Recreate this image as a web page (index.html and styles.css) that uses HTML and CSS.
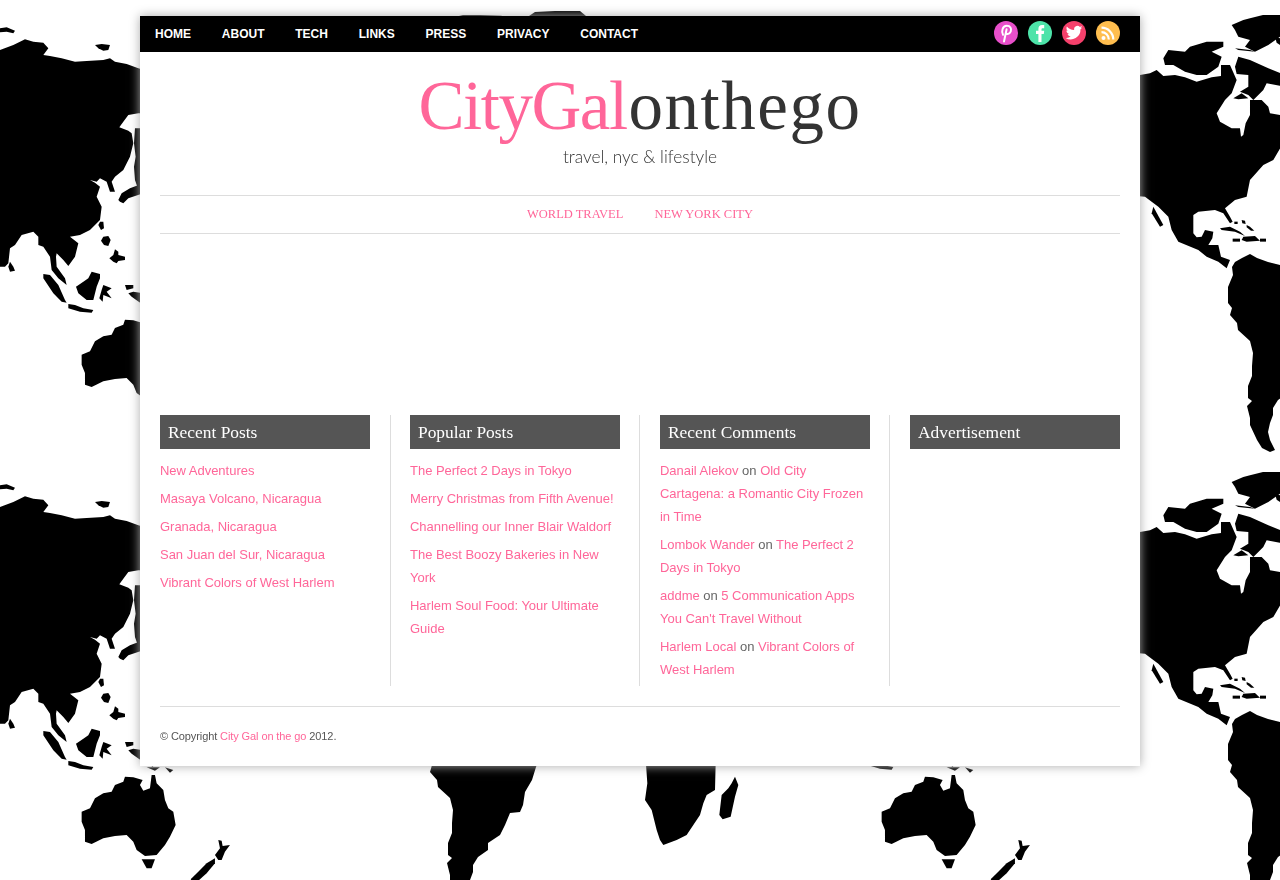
FILE: index.html
```html
<!DOCTYPE html>
<html lang="en">
<head>
  <meta charset="UTF-8">
  <title>City Gal on the go</title>
  <link rel="stylesheet" href="styles.css">
</head>
<body>
  <!-- world map wallpaper, one tile is 800x457 -->
  <svg class="map" width="1280" height="880" aria-hidden="true">
    <defs>
      <pattern id="tile" width="800" height="457" patternUnits="userSpaceOnUse">
        <!-- asia, islands (coords read at 3x) -->
        <g transform="scale(.3333)" fill="#000">
          <polygon points="0,150 40,135 60,125 75,118 100,125 130,128 145,145 130,165 150,168 185,175 225,185 260,183 310,180 330,175 345,185 380,192 415,205 450,215 450,340 415,340 385,345 370,365 358,382 385,392 395,400 400,430 390,470 370,510 345,530 335,545 345,575 330,575 320,545 300,535 290,545 270,540 285,548 300,560 290,590 305,620 300,660 270,690 240,705 210,710 235,730 225,770 205,798 190,780 170,760 168,770 170,800 195,835 200,855 175,835 155,810 150,770 130,740 115,735 115,710 100,695 65,705 45,735 30,745 25,790 15,800 0,800"/>
          <polygon points="405,385 430,385 430,560 412,560 405,540 402,500 407,470 402,430"/>
          <polygon points="0,85 20,82 45,92 40,100 20,95 0,97"/>
          <polygon points="285,135 305,132 330,135 325,150 310,152 295,145"/>
          <polygon points="30,785 40,800 45,812 30,815 25,800"/>
          <polygon points="355,600 365,580 390,565 430,550 430,580 385,595 370,610 360,605"/>
          <polygon points="300,665 310,665 312,685 303,690 295,675"/>
          <polygon points="310,710 325,708 332,720 325,738 312,735 303,722"/>
          <polygon points="345,748 355,755 355,765 375,770 375,780 355,783 350,790 340,785 328,775 340,765"/>
          <polygon points="130,822 150,825 175,855 195,900 200,908 185,905 160,880 130,835"/>
          <polygon points="205,912 225,915 250,925 280,930 275,938 240,935 205,925"/>
          <polygon points="275,815 300,822 300,835 290,860 280,900 260,900 235,880 228,860 250,845 265,835"/>
          <polygon points="310,855 335,865 320,875 335,895 310,885 308,905 298,895 305,870"/>
          <polygon points="375,855 400,855 400,865 380,870"/>
          <polygon points="385,880 400,875 430,880 460,930 490,945 430,915 395,890"/>
        </g>
        <!-- australia, nz -->
        <g transform="translate(-160 303) scale(.3333)">
          <polygon points="725,155 750,145 765,115 790,100 815,95 825,75 850,65 855,50 880,52 908,60 900,75 910,92 930,85 935,45 945,45 950,70 970,90 975,120 985,145 1000,155 1007,195 990,230 975,255 950,285 915,288 890,270 880,245 860,225 825,228 790,235 755,252 735,245 735,210 725,185"/>
          <polygon points="905,298 945,298 935,325 920,325"/>
          <polygon points="1135,240 1145,242 1148,258 1170,255 1155,275 1145,300 1135,300 1125,285 1140,265"/>
          <polygon points="1125,295 1125,310 1100,340 1080,358 1060,372 1040,380 1055,355 1075,335 1100,310"/>
          <polygon points="920,22 960,22 945,32"/>
          <polygon points="975,22 1000,30 990,38"/>
        </g>
        <!-- africa, madagascar -->
        <g transform="translate(640 303) scale(.3333)">
          <polygon points="15,-30 228,-30 225,90 200,105 190,130 180,165 160,195 140,225 110,240 70,255 60,240 50,210 35,150 15,120 22,70"/>
          <polygon points="285,50 295,75 285,110 272,170 248,178 238,165 245,105 265,85 275,70"/>
        </g>
        <!-- north america -->
        <g transform="translate(335 0) scale(.3333)">
          <polygon points="-30,235 15,225 45,220 65,210 85,228 120,225 150,232 185,245 230,232 258,228 258,195 285,195 305,240 290,280 270,300 245,340 255,365 290,385 315,385 318,410 325,405 332,370 345,345 345,300 380,300 400,320 405,340 435,345 450,345 450,420 415,480 385,495 345,540 335,590 300,600 270,625 285,650 293,665 285,670 265,640 240,630 190,635 175,645 175,700 185,712 200,710 210,690 235,695 232,715 220,735 250,735 258,770 285,780 275,805 250,785 215,770 190,750 130,725 110,690 100,650 70,620 30,590 -30,585"/>
          <polygon points="55,620 85,675 75,680 50,640"/>
          <polygon points="85,175 100,150 150,155 165,140 200,130 215,125 265,125 265,140 230,155 260,170 250,200 215,225 185,225 150,215 115,195 90,195"/>
          <polygon points="300,200 310,170 345,180 400,205 450,225 450,260 395,250 385,270 355,300 340,285 315,275 340,260 340,225 305,222"/>
          <polygon points="295,295 320,280 340,295 310,298"/>
          <polygon points="290,75 325,60 345,55 384,45 435,45 500,47 500,120 435,110 400,135 360,155 330,140 345,120 310,110 300,90"/>
          <polygon points="300,145 345,150 360,155 310,150"/>
          <polygon points="420,110 435,115 435,135 425,128"/>
          <polygon points="255,685 285,680 315,695 330,708 300,695 260,690"/>
          <polygon points="325,710 360,708 375,722 335,725 320,720"/>
          <polygon points="293,716 315,716 315,725 293,725"/>
          <polygon points="375,716 393,716 393,725 375,725"/>
          <polygon points="298,665 308,665 308,672 298,672"/>
          <polygon points="320,660 330,662 332,672 322,670"/>
          <polygon points="335,675 345,680 358,692 348,692 335,682"/>
        </g>
        <!-- south america, plain tile coords -->
        <polygon points="435,262 442,258 450,254 457,258 468,262 480,265 500,272 525,290 540,300 536,310 532,323 525,335 523,348 520,355 510,356 505,368 500,378 488,386 488,393 478,400 473,408 473,415 470,423 468,432 470,440 475,450 470,452 462,448 457,440 450,425 450,418 447,406 452,401 448,398 448,386 452,376 452,366 453,353 450,341 438,330 437,323 430,315 432,308 428,303 428,287 433,275 432,267"/>
        <!-- top of greenland -->
        <polygon points="529,16 535,12 555,11 580,11 586,16 586,30 529,30"/>
      </pattern>
    </defs>
    <rect width="1280" height="880" fill="url(#tile)"/>
  </svg>

  <div class="wrapper">
    <nav class="topbar">
      <ul class="menu">
        <li><a href="#">Home</a></li>
        <li><a href="#">About</a></li>
        <li><a href="#">Tech</a></li>
        <li><a href="#">Links</a></li>
        <li><a href="#">Press</a></li>
        <li><a href="#">Privacy</a></li>
        <li><a href="#">Contact</a></li>
      </ul>
      <div class="social">
        <a href="#" title="Pinterest">
          <svg width="24" height="24" viewBox="0 0 24 24">
            <circle cx="12" cy="12" r="12" fill="#e84fca"/>
            <path d="M9 13.800C7.300 11 8.200 4.800 12.800 4.800c3.600 0 4.800 2.800 4 5.400-.7 2.200-2.800 3.400-4.800 2.300M12.600 8.200 10 20.500" fill="none" stroke="#fff" stroke-width="2" stroke-linecap="round"/>
          </svg>
        </a>
        <a href="#" title="Facebook">
          <svg width="24" height="24" viewBox="0 0 24 24">
            <circle cx="12" cy="12" r="12" fill="#4de3a9"/>
            <path d="M10.400 21V13H8V9.800h2.400V8c0-2.600 1.400-4 3.600-4h2.200v3.200h-1.500c-.9 0-1.200.4-1.200 1.200v1.400h2.700l-.4 3.200h-2.300v8z" fill="#fff"/>
          </svg>
        </a>
        <a href="#" title="Twitter">
          <svg width="24" height="24" viewBox="0 0 24 24">
            <circle cx="12" cy="12" r="12" fill="#f5406b"/>
            <path d="M20.500 6.500c-.6.3-1.300.4-2 .5.700-.4 1.300-1.100 1.500-1.900-.7.400-1.400.7-2.100.8a3.400 3.400 0 0 0-5.800 3.100C9.100 8.800 6.600 7.400 4.900 5.400c-.9 1.600-.4 3.600 1 4.600-.5 0-1.100-.2-1.500-.4 0 1.700 1.200 3.100 2.700 3.400-.5.100-1 .2-1.500.1.400 1.400 1.700 2.300 3.100 2.400a6.900 6.900 0 0 1-5.100 1.400 9.700 9.700 0 0 0 14.900-8.600c.8-.5 1.500-1.200 2-2z" fill="#fff"/>
          </svg>
        </a>
        <a href="#" title="RSS">
          <svg width="24" height="24" viewBox="0 0 24 24">
            <circle cx="12" cy="12" r="12" fill="#ffbe4f"/>
            <circle cx="7.500" cy="17" r="2" fill="#fff"/>
            <path d="M5.500 11.200a7.300 7.300 0 0 1 7.300 7.300M5.500 6.700a11.800 11.800 0 0 1 11.800 11.800" fill="none" stroke="#fff" stroke-width="2.200"/>
          </svg>
        </a>
      </div>
    </nav>

    <header class="masthead">
      <a href="#" class="logo"><span class="logo-pink">CityGal</span><span class="logo-dark">onthego</span></a>
      <div class="tagline">travel, nyc &amp; lifestyle</div>
    </header>

    <nav class="catnav">
      <a href="#">World Travel</a>
      <a href="#">New York City</a>
    </nav>

    <div class="slider"></div>

    <div class="widgets">
      <section class="widget">
        <h3>Recent Posts</h3>
        <ul>
          <li><a href="#">New Adventures</a></li>
          <li><a href="#">Masaya Volcano, Nicaragua</a></li>
          <li><a href="#">Granada, Nicaragua</a></li>
          <li><a href="#">San Juan del Sur, Nicaragua</a></li>
          <li><a href="#">Vibrant Colors of West Harlem</a></li>
        </ul>
      </section>
      <section class="widget">
        <h3>Popular Posts</h3>
        <ul>
          <li><a href="#">The Perfect 2 Days in Tokyo</a></li>
          <li><a href="#">Merry Christmas from Fifth Avenue!</a></li>
          <li><a href="#">Channelling our Inner Blair Waldorf</a></li>
          <li><a href="#">The Best Boozy Bakeries in New York</a></li>
          <li><a href="#">Harlem Soul Food: Your Ultimate Guide</a></li>
        </ul>
      </section>
      <section class="widget">
        <h3>Recent Comments</h3>
        <ul>
          <li><a href="#">Danail Alekov</a> on <a href="#">Old City Cartagena: a Romantic City Frozen in Time</a></li>
          <li><a href="#">Lombok Wander</a> on <a href="#">The Perfect 2 Days in Tokyo</a></li>
          <li><a href="#">addme</a> on <a href="#">5 Communication Apps You Can't Travel Without</a></li>
          <li><a href="#">Harlem Local</a> on <a href="#">Vibrant Colors of West Harlem</a></li>
        </ul>
      </section>
      <section class="widget">
        <h3>Advertisement</h3>
      </section>
    </div>

    <footer class="copyright">
      © Copyright <a href="#">City Gal on the go</a> 2012.
    </footer>
  </div>
</body>
</html>
```

FILE: styles.css
```css
html, body {
  margin: 0;
  padding: 0;
}
body {
  font-family: "Liberation Sans", Arial, sans-serif;
  font-size: 13px;
  color: #666;
  background: #fff;
  padding-top: 16px;
  padding-bottom: 20px;
}
a {
  color: #ff6699;
  text-decoration: none;
}
ul {
  list-style: none;
  margin: 0;
  padding: 0;
}
.map {
  position: fixed;
  top: 0;
  left: 0;
  z-index: -1;
}
.wrapper {
  width: 1000px;
  height: 750px;
  margin: 0 auto;
  background: #fff;
  box-shadow: 0 0 10px #aaa;
}

/* top bar */
.topbar {
  display: flex;
  justify-content: space-between;
  align-items: center;
  box-sizing: border-box;
  height: 36px;
  background: #000;
  padding: 0 20px 2px 15px;
}
.menu {
  display: flex;
  gap: 30.8px;
}
.menu a {
  color: #fff;
  font-size: 12px;
  font-weight: bold;
  text-transform: uppercase;
}
.social {
  display: flex;
  gap: 10px;
}
.social a, .social svg {
  display: block;
}

/* logo */
.masthead {
  height: 143px;
  padding-top: 15px;
  box-sizing: border-box;
  text-align: center;
}
.logo {
  display: block;
  font-family: "Liberation Serif", serif;
  font-size: 69px;
  line-height: 78px;
}
.logo-pink {
  color: #ff6699;
  letter-spacing: -1.5px;
}
.logo-dark {
  color: #333;
  letter-spacing: 1.5px;
  margin-left: 2px;
}
.tagline {
  margin-top: 2px;
  font-family: Lato, sans-serif;
  font-weight: 300;
  font-size: 17.3px;
  line-height: 20px;
  color: #333;
}

/* categories */
.catnav {
  display: flex;
  justify-content: center;
  gap: 31px;
  margin: 0 20px;
  height: 37px;
  line-height: 36px;
  border-top: 1px solid #ddd;
  border-bottom: 1px solid #ddd;
  font-family: "Liberation Serif", serif;
  font-size: 12.5px;
  text-transform: uppercase;
}
.slider {
  height: 181px;
}

/* footer widgets */
.widgets {
  display: flex;
  gap: 20px;
  margin: 0 20px;
}
.widget {
  box-sizing: border-box;
  width: 230px;
  height: 271px;
  padding-right: 19px;
  border-right: 1px solid #ddd;
}
.widget:first-child {
  width: 231px;
  padding-right: 20px;
  margin-right: -1px;
}
.widget:last-child {
  width: 210px;
  padding-right: 0;
  border-right: 0;
}
.widget h3 {
  margin: 0 0 10px;
  padding-left: 8px;
  height: 34px;
  line-height: 34px;
  background: #555;
  color: #fff;
  font-family: "Liberation Serif", serif;
  font-size: 17.4px;
  font-weight: normal;
}
.widget li {
  line-height: 23px;
  margin-bottom: 5px;
  letter-spacing: -.02px;
}
.copyright {
  margin: 20px 20px 0;
  border-top: 1px solid #ddd;
  padding-top: 22px;
  font-size: 11px;
  line-height: 15px;
  letter-spacing: -.1px;
  color: #555;
}
```
